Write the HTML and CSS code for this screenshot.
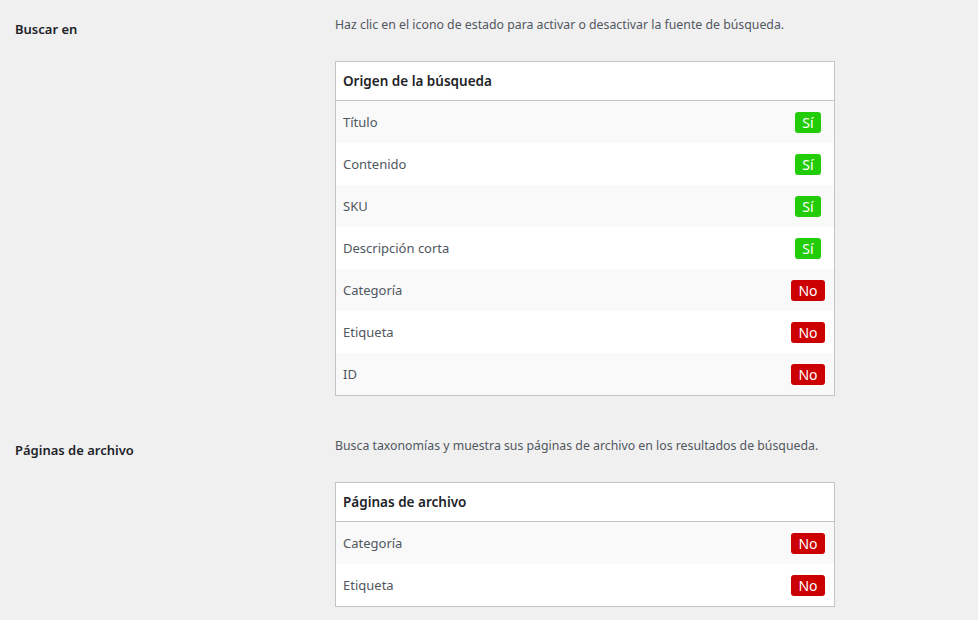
FILE: index.html
```html
<!DOCTYPE html>
<html lang="es">
<head>
  <meta charset="UTF-8" />
  <title>Ajustes de búsqueda</title>
  <link rel="stylesheet" href="styles.css">
</head>
<body>
  <div class="settings">
    <div class="setting-row">
      <div class="setting-label">Buscar en</div>
      <div class="setting-field">
        <p class="description">Haz clic en el icono de estado para activar o desactivar la fuente de búsqueda.</p>
        <div class="source-table">
          <div class="source-head">Origen de la búsqueda</div>
          <div class="source-row"><span class="source-name">Título</span><span class="source-status"><span class="badge on">Sí</span></span></div>
          <div class="source-row"><span class="source-name">Contenido</span><span class="source-status"><span class="badge on">Sí</span></span></div>
          <div class="source-row"><span class="source-name">SKU</span><span class="source-status"><span class="badge on">Sí</span></span></div>
          <div class="source-row"><span class="source-name">Descripción corta</span><span class="source-status"><span class="badge on">Sí</span></span></div>
          <div class="source-row"><span class="source-name">Categoría</span><span class="source-status"><span class="badge off">No</span></span></div>
          <div class="source-row"><span class="source-name">Etiqueta</span><span class="source-status"><span class="badge off">No</span></span></div>
          <div class="source-row"><span class="source-name">ID</span><span class="source-status"><span class="badge off">No</span></span></div>
        </div>
      </div>
    </div>

    <div class="setting-row">
      <div class="setting-label">Páginas de archivo</div>
      <div class="setting-field">
        <p class="description">Busca taxonomías y muestra sus páginas de archivo en los resultados de búsqueda.</p>
        <div class="source-table">
          <div class="source-head">Páginas de archivo</div>
          <div class="source-row"><span class="source-name">Categoría</span><span class="source-status"><span class="badge off">No</span></span></div>
          <div class="source-row"><span class="source-name">Etiqueta</span><span class="source-status"><span class="badge off">No</span></span></div>
        </div>
      </div>
    </div>
  </div>
</body>
</html>
```

FILE: styles.css
```css
* {
  box-sizing: border-box;
  margin: 0;
  padding: 0;
}

body {
  font-family: "Noto Sans", "Open Sans", sans-serif;
  font-size: 13px;
  background: #f0f0f1;
  color: #3c434a;
}

.setting-row {
  display: flex;
}

.setting-label {
  width: 335px;
  padding: 19px 0 0 15px;
  font-size: 13px;
  font-weight: 600;
  line-height: 20px;
  color: #1d2327;
}

.setting-field {
  padding: 15px 0 25px;
}

.description {
  font-size: 12.3px;
  line-height: 19px;
  color: #50575e;
  margin-bottom: 27px;
}

/* Tabla de fuentes */
.source-table {
  width: 500px;
  background: #fff;
  border: 1px solid #c3c4c7;
}

.source-head {
  height: 39px;
  display: flex;
  align-items: center;
  padding-left: 7px;
  border-bottom: 1px solid #c3c4c7;
  font-size: 13.5px;
  font-weight: 600;
  color: #1d2327;
}

.source-row {
  height: 42px;
  display: flex;
  align-items: center;
  padding-left: 7px;
  color: #50575e;
}

.source-row:nth-child(even) {
  background: #f9f9f9;
}

.source-name {
  flex: 1;
}

.source-status {
  width: 52px;
  text-align: center;
}

.badge {
  display: inline-block;
  height: 21px;
  line-height: 21px;
  padding: 0 7px;
  border-radius: 3px;
  font-size: 14px;
  color: #fff;
  cursor: pointer;
}

.badge.on {
  background: #22cc08;
}

.badge.off {
  background: #cc0000;
}
```
